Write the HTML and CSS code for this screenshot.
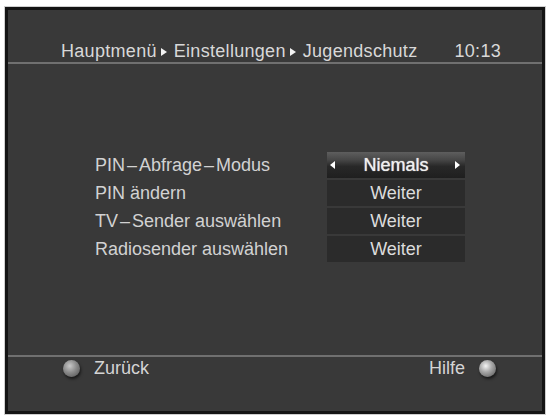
FILE: index.html
```html
<!DOCTYPE html>
<html lang="de">
<head>
<meta charset="utf-8">
<title>Jugendschutz</title>
<link rel="stylesheet" href="styles.css">
</head>
<body>
<div class="screen">
  <div class="header">
    <div class="crumbs">
      <span>Hauptmenü</span>
      <svg class="sep" width="6" height="8" viewBox="0 0 6 8"><polygon points="0,0 6,4 0,8" fill="#f2f2f2"/></svg>
      <span>Einstellungen</span>
      <svg class="sep" width="6" height="8" viewBox="0 0 6 8"><polygon points="0,0 6,4 0,8" fill="#f2f2f2"/></svg>
      <span>Jugendschutz</span>
    </div>
    <div class="time">10:13</div>
  </div>
  <div class="rule"></div>

  <div class="menu">
    <div class="label">PIN<span class="dash">–</span>Abfrage<span class="dash">–</span>Modus</div>
    <div class="value selected">
      <svg class="arr left" width="5" height="8" viewBox="0 0 5 8"><polygon points="5,0 0,4 5,8" fill="#fff"/></svg>
      <span>Niemals</span>
      <svg class="arr right" width="5" height="8" viewBox="0 0 5 8"><polygon points="0,0 5,4 0,8" fill="#fff"/></svg>
    </div>
    <div class="label">PIN ändern</div>
    <div class="value"><span>Weiter</span></div>
    <div class="label">TV<span class="dash">–</span>Sender auswählen</div>
    <div class="value"><span>Weiter</span></div>
    <div class="label">Radiosender auswählen</div>
    <div class="value"><span>Weiter</span></div>
  </div>

  <div class="footer">
    <div class="rule"></div>
    <div class="keys">
      <div class="key"><span class="ball"></span><span>Zurück</span></div>
      <div class="key"><span>Hilfe</span><span class="ball bright"></span></div>
    </div>
  </div>
</div>
</body>
</html>
```

FILE: styles.css
```css
html, body {
  margin: 0;
  padding: 0;
  background: #ffffff;
}
body {
  width: 550px;
  height: 415px;
  overflow: hidden;
  font-family: "Liberation Sans", Arial, sans-serif;
}
.screen {
  box-sizing: border-box;
  margin: 7px 0 0 5px;
  width: 540px;
  height: 407px;
  border: 3px solid #141414;
  outline: 1px solid #cfcfcf;
  background: #393939;
  display: flex;
  flex-direction: column;
  color: #d6d6d6;
  font-size: 18px;
}
.header {
  margin-top: 31px;
  height: 21px;
  line-height: 21px;
  display: flex;
  justify-content: space-between;
  padding: 0 41px 0 53px;
  color: #d8d8d8;
  letter-spacing: 0.3px;
}
.crumbs {
  display: flex;
  align-items: center;
}
.sep {
  margin: 0 7px 0 4px;
}
.rule {
  height: 2px;
  background: #707070;
}
.menu {
  margin-top: 88px;
  display: grid;
  grid-template-columns: 232px 138px;
  grid-auto-rows: 26px;
  row-gap: 2px;
  padding-left: 87px;
}
.label {
  line-height: 26px;
  color: #d2d2d2;
}
.dash {
  display: inline-block;
  margin: 0 2px;
}
.value {
  position: relative;
  background: #2b2b2b;
  display: flex;
  align-items: center;
  justify-content: center;
  color: #dcdcdc;
}
.value.selected {
  background: linear-gradient(#5e5e5e 0%, #474747 30%, #282828 55%, #1f1f1f 100%);
  color: #efefef;
  text-shadow: 0 0 1px #efefef;
}
.arr {
  position: absolute;
  top: 9px;
}
.arr.left { left: 3px; }
.arr.right { right: 5px; }
.footer {
  margin-top: auto;
  padding-bottom: 32px;
}
.keys {
  height: 22px;
  display: flex;
  justify-content: space-between;
  align-items: center;
  padding: 0 46px 0 55px;
  color: #d4d4d4;
}
.key {
  display: flex;
  align-items: center;
  gap: 14px;
}
.ball {
  width: 17px;
  height: 17px;
  border-radius: 50%;
  background: radial-gradient(circle at 40% 35%, #c8c8c8 0%, #8a8a8a 45%, #4a4a4a 100%);
  box-shadow: 1px 2px 3px rgba(0,0,0,0.6);
}
.ball.bright {
  background: radial-gradient(circle at 40% 35%, #f4f4f4 0%, #a8a8a8 40%, #505050 100%);
}
```
